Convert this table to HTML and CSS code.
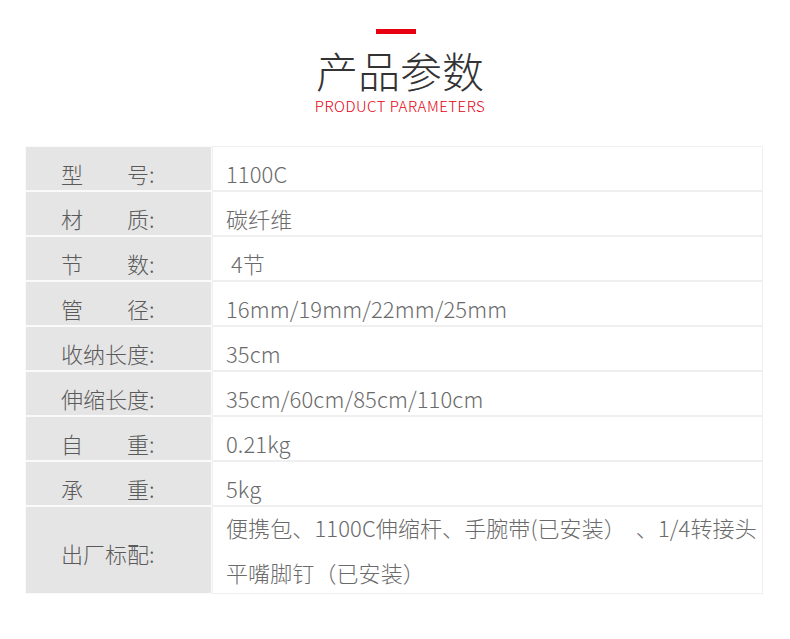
FILE: index.html
```html
<!DOCTYPE html>
<html lang="zh">
<head>
    <meta charset="UTF-8">
    <title>产品参数</title>
    <link rel="stylesheet" href="styles.css">
</head>
<body>

<div class="title-box">
    <div class="red-line"></div>
    <h1>产品参数</h1>
    <div class="en-title">PRODUCT PARAMETERS</div>
</div>

<table class="params">
    <tr><td class="label">型　　号:</td><td class="value">1100C</td></tr>
    <tr><td class="label">材　　质:</td><td class="value">碳纤维</td></tr>
    <tr><td class="label">节　　数:</td><td class="value">&nbsp;4节</td></tr>
    <tr><td class="label">管　　径:</td><td class="value">16mm/19mm/22mm/25mm</td></tr>
    <tr><td class="label">收纳长度:</td><td class="value">35cm</td></tr>
    <tr><td class="label">伸缩长度:</td><td class="value">35cm/60cm/85cm/110cm</td></tr>
    <tr><td class="label">自　　重:</td><td class="value">0.21kg</td></tr>
    <tr><td class="label">承　　重:</td><td class="value">5kg</td></tr>
    <tr class="tall">
        <td class="label">出厂标配:</td>
        <td class="value">
            <div class="lines">便携包、1100C伸缩杆、手腕带(已安装） &nbsp;、1/4转接头<br>平嘴脚钉（已安装）</div>
        </td>
    </tr>
</table>

</body>
</html>
```

FILE: styles.css
```css
* {
    margin: 0;
    padding: 0;
    box-sizing: border-box;
    font-family: 'Noto Sans CJK SC', 'Noto Sans', sans-serif;
    text-spacing-trim: space-all;
}
body {
    background: #fff;
    width: 790px;
}
.title-box {
    display: flex;
    flex-direction: column;
    align-items: center;
    padding-top: 29px;
}
.red-line {
    width: 40px;
    height: 5px;
    background: #e60012;
    margin-left: 2px;
}
.title-box h1 {
    font-size: 42px;
    font-weight: 300;
    line-height: 42px;
    color: #333;
    margin-top: 15px;
    margin-left: 10px;
}
.en-title {
    font-size: 15px;
    font-weight: 300;
    line-height: 15px;
    letter-spacing: 0.5px;
    color: #e60012;
    margin-top: 7px;
    margin-left: 10px;
}
.params {
    margin: 33px 0 0 25px;
    width: 738px;
    table-layout: fixed;
    border-collapse: separate;
    border-spacing: 0;
}
.params td {
    height: 45px;
    border: 1px solid #efefef;
    font-size: 22px;
    font-weight: 300;
    line-height: 33px;
    padding-top: 10px;
    white-space: nowrap;
    overflow: hidden;
}
.params td.label {
    width: 187px;
    background: #e5e5e5;
    border-color: #fafafa;
    padding-left: 35px;
    color: #5a5a5a;
}
.params td.value {
    padding-left: 13px;
    letter-spacing: 0.1px;
    color: #6a6a6a;
}
.params tr.tall td {
    height: 88px;
}
.params tr.tall td.label {
    padding-top: 6px;
}
.params tr.tall td.value {
    padding-top: 0;
    vertical-align: top;
}
.lines {
    line-height: 45px;
    margin: -2px 0 -4px;
}
```
